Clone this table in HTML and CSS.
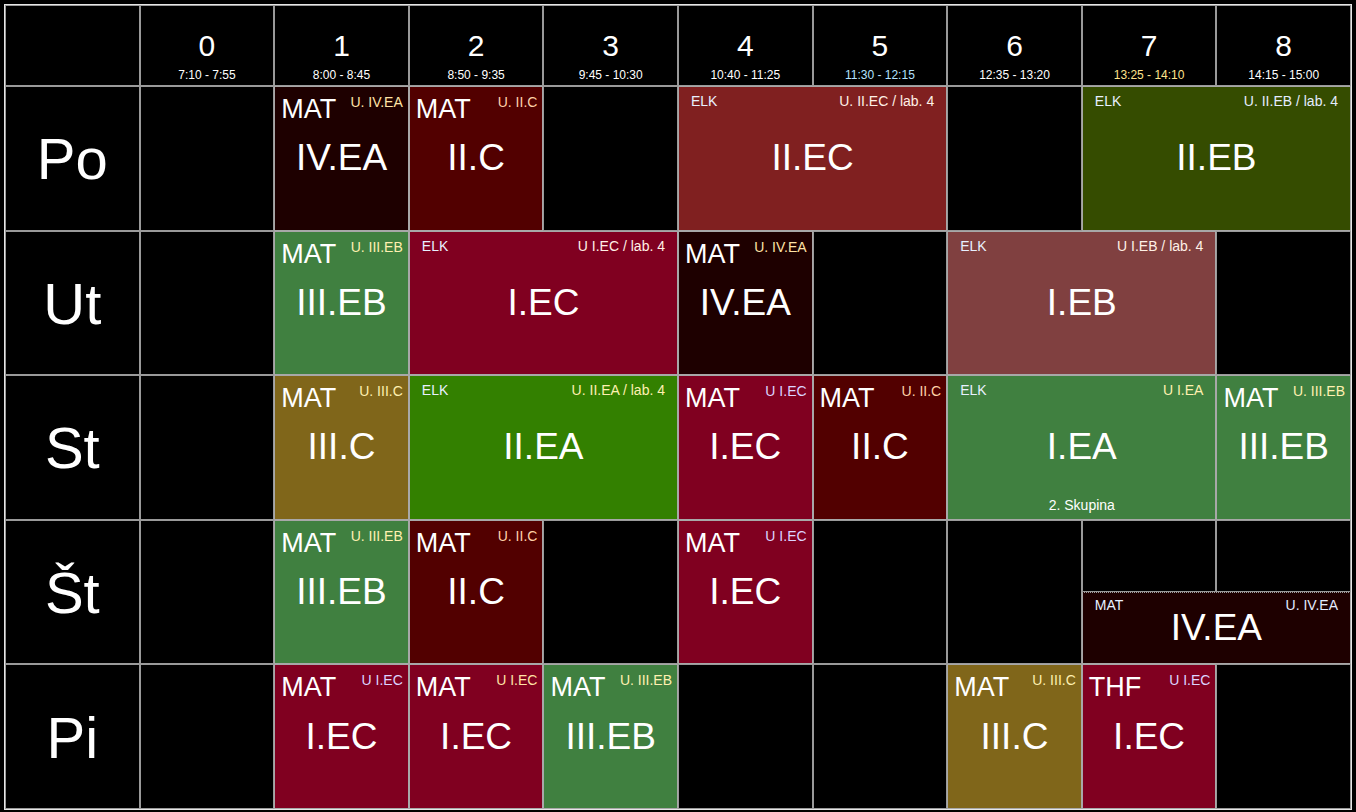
FILE: index.html
```html
<!DOCTYPE html>
<html lang="sk">
<head>
<meta charset="utf-8">
<title>Rozvrh</title>
<link rel="stylesheet" href="styles.css">
</head>
<body>
<div class="tt">
  <div class="corner"></div>
  <div class="hd"><span class="num">0</span><span class="time">7:10 - 7:55</span></div>
  <div class="hd"><span class="num">1</span><span class="time">8:00 - 8:45</span></div>
  <div class="hd"><span class="num">2</span><span class="time">8:50 - 9:35</span></div>
  <div class="hd"><span class="num">3</span><span class="time">9:45 - 10:30</span></div>
  <div class="hd"><span class="num">4</span><span class="time">10:40 - 11:25</span></div>
  <div class="hd"><span class="num">5</span><span class="time t-now">11:30 - 12:15</span></div>
  <div class="hd"><span class="num">6</span><span class="time">12:35 - 13:20</span></div>
  <div class="hd"><span class="num">7</span><span class="time t-next">13:25 - 14:10</span></div>
  <div class="hd"><span class="num">8</span><span class="time">14:15 - 15:00</span></div>

  <!-- Po -->
  <div class="day">Po</div>
  <div class="e"></div>
  <div class="l c-dm"><div class="top"><span class="subj">MAT</span><span class="room r-y">U. IV.EA</span></div><div class="cls">IV.EA</div><div class="bot"></div></div>
  <div class="l c-dr"><div class="top"><span class="subj">MAT</span><span class="room r-p">U. II.C</span></div><div class="cls">II.C</div><div class="bot"></div></div>
  <div class="e"></div>
  <div class="l w s2 c-br"><div class="top"><span class="subj">ELK</span><span class="room r-w">U. II.EC / lab. 4</span></div><div class="cls">II.EC</div><div class="bot"></div></div>
  <div class="e"></div>
  <div class="l w s2 c-ol"><div class="top"><span class="subj">ELK</span><span class="room r-b">U. II.EB / lab. 4</span></div><div class="cls">II.EB</div><div class="bot"></div></div>

  <!-- Ut -->
  <div class="day">Ut</div>
  <div class="e"></div>
  <div class="l c-gr"><div class="top"><span class="subj">MAT</span><span class="room r-ly">U. III.EB</span></div><div class="cls">III.EB</div><div class="bot"></div></div>
  <div class="l w s2 c-cr"><div class="top"><span class="subj">ELK</span><span class="room r-w">U I.EC / lab. 4</span></div><div class="cls">I.EC</div><div class="bot"></div></div>
  <div class="l c-dm"><div class="top"><span class="subj">MAT</span><span class="room r-y">U. IV.EA</span></div><div class="cls">IV.EA</div><div class="bot"></div></div>
  <div class="e"></div>
  <div class="l w s2 c-rs"><div class="top"><span class="subj">ELK</span><span class="room r-w">U I.EB / lab. 4</span></div><div class="cls">I.EB</div><div class="bot"></div></div>
  <div class="e"></div>

  <!-- St -->
  <div class="day">St</div>
  <div class="e"></div>
  <div class="l c-oc"><div class="top"><span class="subj">MAT</span><span class="room r-ly">U. III.C</span></div><div class="cls">III.C</div><div class="bot"></div></div>
  <div class="l w s2 c-lg"><div class="top"><span class="subj">ELK</span><span class="room r-ly">U. II.EA / lab. 4</span></div><div class="cls">II.EA</div><div class="bot"></div></div>
  <div class="l c-cr"><div class="top"><span class="subj">MAT</span><span class="room r-l">U I.EC</span></div><div class="cls">I.EC</div><div class="bot"></div></div>
  <div class="l c-dr"><div class="top"><span class="subj">MAT</span><span class="room r-p">U. II.C</span></div><div class="cls">II.C</div><div class="bot"></div></div>
  <div class="l w s2 c-gr"><div class="top"><span class="subj">ELK</span><span class="room r-ly">U I.EA</span></div><div class="cls">I.EA</div><div class="bot">2. Skupina</div></div>
  <div class="l c-gr"><div class="top"><span class="subj">MAT</span><span class="room r-ly">U. III.EB</span></div><div class="cls">III.EB</div><div class="bot"></div></div>

  <!-- Št -->
  <div class="day">Št</div>
  <div class="e"></div>
  <div class="l c-gr"><div class="top"><span class="subj">MAT</span><span class="room r-ly">U. III.EB</span></div><div class="cls">III.EB</div><div class="bot"></div></div>
  <div class="l c-dr"><div class="top"><span class="subj">MAT</span><span class="room r-p">U. II.C</span></div><div class="cls">II.C</div><div class="bot"></div></div>
  <div class="e"></div>
  <div class="l c-cr"><div class="top"><span class="subj">MAT</span><span class="room r-l">U I.EC</span></div><div class="cls">I.EC</div><div class="bot"></div></div>
  <div class="e"></div>
  <div class="e"></div>
  <div class="split s2">
    <div class="e"></div>
    <div class="e"></div>
    <div class="l w half c-dm"><div class="top"><span class="subj">MAT</span><span class="room r-b">U. IV.EA</span></div><div class="cls">IV.EA</div><div class="bot"></div></div>
  </div>

  <!-- Pi -->
  <div class="day">Pi</div>
  <div class="e"></div>
  <div class="l c-cr"><div class="top"><span class="subj">MAT</span><span class="room r-l">U I.EC</span></div><div class="cls">I.EC</div><div class="bot"></div></div>
  <div class="l c-cr"><div class="top"><span class="subj">MAT</span><span class="room r-y">U I.EC</span></div><div class="cls">I.EC</div><div class="bot"></div></div>
  <div class="l c-gr"><div class="top"><span class="subj">MAT</span><span class="room r-ly">U. III.EB</span></div><div class="cls">III.EB</div><div class="bot"></div></div>
  <div class="e"></div>
  <div class="e"></div>
  <div class="l c-oc"><div class="top"><span class="subj">MAT</span><span class="room r-ly">U. III.C</span></div><div class="cls">III.C</div><div class="bot"></div></div>
  <div class="l c-cr"><div class="top"><span class="subj">THF</span><span class="room r-l">U I.EC</span></div><div class="cls">I.EC</div><div class="bot"></div></div>
  <div class="e"></div>
</div>
</body>
</html>
```

FILE: styles.css
```css
html, body {
  margin: 0;
  padding: 0;
  background: #000;
}
body {
  padding: 4px;
  font-family: "Liberation Sans", Arial, sans-serif;
  color: #fff;
}
.tt {
  width: 1348px;
  height: 806px;
  box-sizing: border-box;
  border: 1px solid #e6e6e6;
  display: grid;
  grid-template-columns: repeat(10, 1fr);
  grid-template-rows: 81px repeat(5, 1fr);
}
.corner, .hd, .day, .e, .l {
  box-sizing: border-box;
  border: 1px solid #9a9a9a;
  min-width: 0;
  min-height: 0;
}
.s2 { grid-column: span 2; }

.hd {
  display: flex;
  flex-direction: column;
  align-items: center;
  justify-content: flex-end;
  padding-bottom: 3px;
}
.num {
  font-size: 30px;
  line-height: 34px;
  margin-bottom: 5px;
}
.time {
  font-size: 12px;
  line-height: 14px;
}
.t-now { color: #b4e2ff; }
.t-next { color: #ffe48c; }

.day {
  display: flex;
  align-items: center;
  justify-content: center;
  font-size: 58px;
  padding-top: 1px;
}

.l {
  display: grid;
  grid-template-rows: minmax(0, 1fr) auto minmax(0, 1fr);
  border-color: #a8a8a8;
}
.top {
  display: flex;
  justify-content: space-between;
  align-items: flex-start;
  padding: 7px 5px 0 6px;
}
.subj {
  font-size: 27px;
  line-height: 31px;
}
.room {
  font-size: 14px;
  line-height: 16px;
  margin-top: 0;
}
.cls {
  font-size: 37px;
  line-height: 38px;
  text-align: center;
}
.bot {
  align-self: end;
  text-align: center;
  font-size: 14px;
  line-height: 16px;
  padding-bottom: 6px;
}

.l.w .top {
  padding: 6px 12px 0 12px;
}
.l.w .subj {
  font-size: 14px;
  line-height: 16px;
  color: #e8f0ff;
}

.split {
  display: grid;
  grid-template-columns: 1fr 1fr;
  grid-template-rows: 1fr 1fr;
  min-height: 0;
}
.split .half {
  grid-column: span 2;
  border-top: 1px dotted #a0a0a0;
}
.l.half .top {
  padding-top: 4px;
}

.c-dm { background: #1e0000; }
.c-dr { background: #520000; }
.c-br { background: #802020; }
.c-ol { background: #354c00; }
.c-gr { background: #408040; }
.c-cr { background: #800020; }
.c-rs { background: #804040; }
.c-oc { background: #80661a; }
.c-lg { background: #338000; }

.r-y { color: #ffe3a6; }
.r-p { color: #ffd2a8; }
.r-w { color: #fff0e6; }
.r-b { color: #e4ecff; }
.r-ly { color: #fff0b0; }
.r-l { color: #dcd4ff; }
```
